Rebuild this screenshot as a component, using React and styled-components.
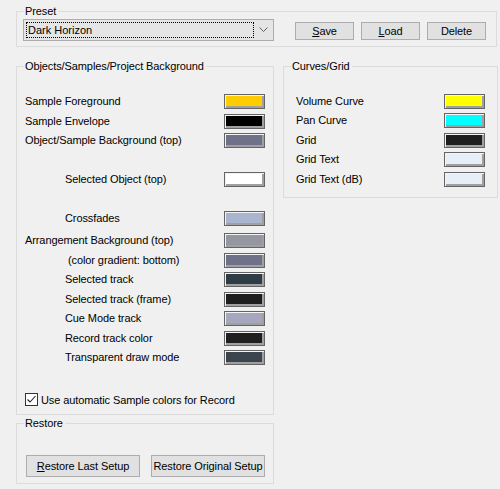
import React from 'react';
import styled, { createGlobalStyle } from 'styled-components';

const GlobalStyle = createGlobalStyle`
  html, body {
    margin: 0;
    padding: 0;
    background: #f0f0f0;
  }
  body {
    font-family: "Liberation Sans", Arial, sans-serif;
    font-size: 11px;
    color: #000;
  }
`;

const Dialog = styled.div`
  width: 500px;
  height: 489px;
  box-sizing: border-box;
  padding: 11px 0 0 16px;
  display: flex;
  flex-direction: column;
`;

const Group = styled.div`
  position: relative;
  box-sizing: border-box;
  border: 1px solid #dcdcdc;
  width: ${({ width }) => width}px;
  height: ${({ height }) => height}px;
  padding: ${({ pad }) => pad || '0'};
`;

const Legend = styled.span`
  position: absolute;
  top: -7px;
  left: 7px;
  padding: 0 2px 0 1px;
  background: #f0f0f0;
  line-height: 13px;
  letter-spacing: -0.1px;
`;

const PresetRow = styled.div`
  display: flex;
  align-items: flex-start;
`;

const Combo = styled.div`
  box-sizing: border-box;
  width: 251px;
  height: 22px;
  border: 1px solid #acacac;
  background: #e5e5e5;
  display: flex;
  align-items: center;
  padding: 2px;
`;

const Focus = styled.div`
  flex: 1;
  height: 16px;
  border: 1px dotted #000;
  box-sizing: border-box;
  display: flex;
  align-items: center;
  padding-left: 1px;
`;

const Arrow = styled.div`
  width: 16px;
  display: flex;
  justify-content: center;
  align-items: center;
  margin-left: 1px;
`;

const Buttons = styled.div`
  display: flex;
  gap: 7px;
  margin: 3px 0 0 21px;
`;

const Button = styled.button`
  box-sizing: border-box;
  width: ${({ width }) => width || 59}px;
  height: ${({ height }) => height || 18}px;
  border: 1px solid #adadad;
  background: #e1e1e1;
  font-family: "Liberation Sans", Arial, sans-serif;
  font-size: 11px;
  letter-spacing: -0.1px;
  color: #000;
  padding: 0;
  white-space: nowrap;
  display: flex;
  align-items: center;
  justify-content: center;
  u {
    text-decoration: underline;
    text-underline-offset: 1px;
  }
`;

const Columns = styled.div`
  display: flex;
  gap: 9px;
  margin-top: 19px;
`;

const LeftColumn = styled.div`
  display: flex;
  flex-direction: column;
  gap: 8px;
`;

const Rows = styled.div`
  display: flex;
  flex-direction: column;
`;

const Row = styled.div`
  display: flex;
  align-items: center;
  justify-content: space-between;
  height: 15px;
  margin-top: ${({ space }) => space}px;
`;

const Label = styled.span`
  padding-left: ${({ indent }) => indent || 0}px;
  letter-spacing: -0.1px;
  line-height: 13px;
  margin-top: -1px;
  white-space: pre;
`;

const Swatch = styled.div`
  box-sizing: border-box;
  width: 41px;
  height: 15px;
  border: 1px solid #646464;
  background: ${({ color }) => color};
  box-shadow: inset 1px 1px 0 #f4f4f4, inset -2px -2px 0 #a0a0a0;
`;

const CheckRow = styled.label`
  display: flex;
  align-items: center;
  gap: 3px;
  margin-top: 28px;
  letter-spacing: -0.1px;
`;

const CheckBox = styled.span`
  box-sizing: border-box;
  width: 13px;
  height: 13px;
  border: 1px solid #333;
  background: #fff;
  display: flex;
  align-items: center;
  justify-content: center;
`;

const RestoreButtons = styled.div`
  display: flex;
  gap: 11px;
  margin-top: 31px;
`;

const objects = [
  { label: 'Sample Foreground', color: '#ffcc00', space: 0 },
  { label: 'Sample Envelope', color: '#000000', space: 5 },
  { label: 'Object/Sample Background (top)', color: '#6f7189', space: 4 },
  { label: 'Selected Object (top)', color: '#ffffff', space: 24, indent: 40 },
  { label: 'Crossfades', color: '#a9b5cf', space: 24, indent: 40 },
  { label: 'Arrangement Background (top)', color: '#9497a0', space: 7 },
  { label: '(color gradient: bottom)', color: '#6f7189', space: 5, indent: 43 },
  { label: 'Selected track', color: '#2e3c46', space: 4, indent: 40 },
  { label: 'Selected track (frame)', color: '#1e1e1e', space: 5, indent: 40 },
  { label: 'Cue Mode track', color: '#a6a6be', space: 4, indent: 40 },
  { label: 'Record track color', color: '#1f1f1f', space: 5, indent: 40 },
  { label: 'Transparent draw mode', color: '#3c444d', space: 4, indent: 40 },
];

const curves = [
  { label: 'Volume Curve', color: '#ffff00', space: 0 },
  { label: 'Pan Curve', color: '#00ffff', space: 4 },
  { label: 'Grid', color: '#1e1e1e', space: 5 },
  { label: 'Grid Text', color: '#e6eef8', space: 4 },
  { label: 'Grid Text (dB)', color: '#e6eef8', space: 5 },
];

const ColorRows = ({ items }) => (
  <Rows>
    {items.map((item) => (
      <Row key={item.label} space={item.space}>
        <Label indent={item.indent}>{item.label}</Label>
        <Swatch color={item.color} />
      </Row>
    ))}
  </Rows>
);

const App = () => {
  return (
    <>
      <GlobalStyle />
      <Dialog>
        <Group width={481} height={36} pad="7px 0 0 6px">
          <Legend>Preset</Legend>
          <PresetRow>
            <Combo>
              <Focus>Dark Horizon</Focus>
              <Arrow>
                <svg width="9" height="6" viewBox="0 0 9 6">
                  <path d="M0.5 0.5 L4.5 4.5 L8.5 0.5" fill="none" stroke="#606060" strokeWidth="1" />
                </svg>
              </Arrow>
            </Combo>
            <Buttons>
              <Button><span><u>S</u>ave</span></Button>
              <Button><span><u>L</u>oad</span></Button>
              <Button>Delete</Button>
            </Buttons>
          </PresetRow>
        </Group>

        <Columns>
          <LeftColumn>
            <Group width={258} height={349} pad="27px 8px 0 8px">
              <Legend>Objects/Samples/Project Background</Legend>
              <ColorRows items={objects} />
              <CheckRow>
                <CheckBox>
                  <svg width="11" height="11" viewBox="0 0 11 11">
                    <path d="M1.5 5.5 L4 8 L9.5 2" fill="none" stroke="#222" strokeWidth="1.1" />
                  </svg>
                </CheckBox>
                Use automatic Sample colors for Record
              </CheckRow>
            </Group>
            <Group width={258} height={61} pad="0 0 0 9px">
              <Legend>Restore</Legend>
              <RestoreButtons>
                <Button width={114} height={22}><span><u>R</u>estore Last Setup</span></Button>
                <Button width={114} height={22}>Restore Original Setup</Button>
              </RestoreButtons>
            </Group>
          </LeftColumn>
          <Group width={215} height={132} pad="27px 12px 0 12px">
            <Legend>Curves/Grid</Legend>
            <ColorRows items={curves} />
          </Group>
        </Columns>
      </Dialog>
    </>
  );
};

export default App;
